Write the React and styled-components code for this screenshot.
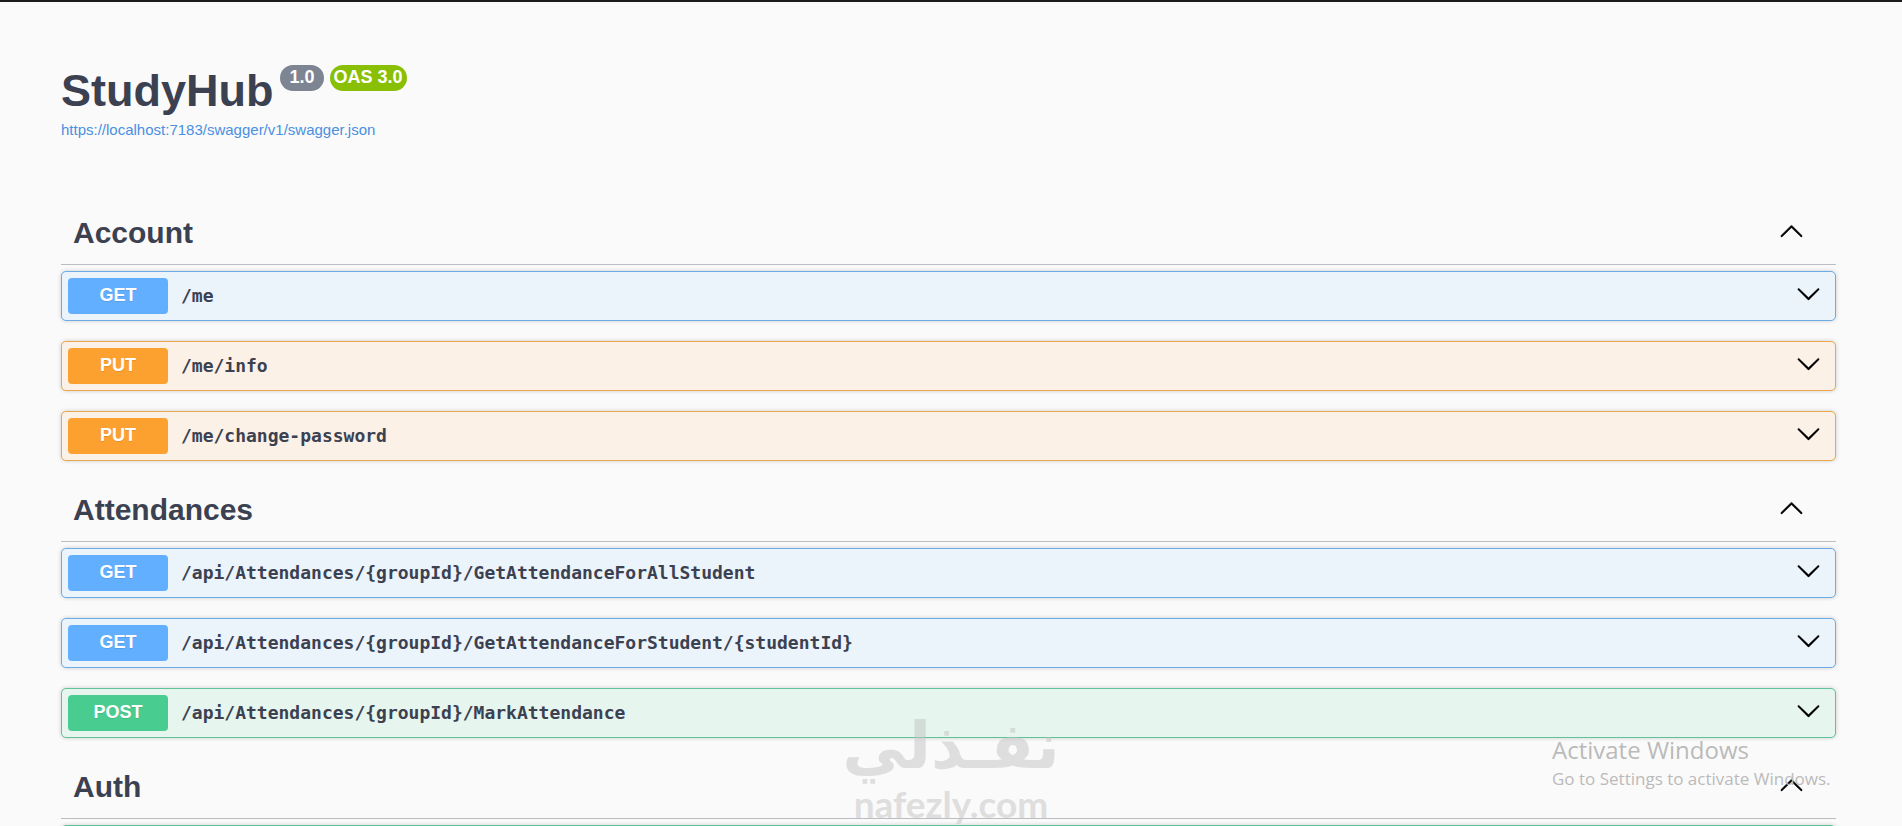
import React from "react";
import styled, { createGlobalStyle } from "styled-components";

const GlobalStyle = createGlobalStyle`
  *, *::before, *::after { box-sizing: border-box; }
  body {
    margin: 0;
    background: #fafafa;
    color: #3b4151;
    font-family: "Liberation Sans", Arial, sans-serif;
  }
`;

const tones = {
  GET: { main: "#61affe", border: "#6cabe6", fill: "#ebf3fb" },
  PUT: { main: "#fca130", border: "#eba64d", fill: "#fbf1e6" },
  POST: { main: "#49cc90", border: "#5fc29a", fill: "#e6f5ed" },
};

const Page = styled.div`
  position: relative;
  height: 100vh;
  overflow: hidden;
  border-top: 2px solid #1b1b1d;
  padding-right: 5px;
`;

const Container = styled.main`
  max-width: 1825px;
  margin: 0 auto;
  padding: 0 25px;
`;

const Info = styled.header`
  padding: 62px 0 64px;
`;

const TitleRow = styled.div`
  display: flex;
  align-items: flex-start;
`;

const Title = styled.h1`
  margin: 0 7px 0 0;
  font-size: 45px;
  line-height: 54px;
`;

const Badge = styled.span`
  height: 26px;
  margin: 1px 6px 0 0;
  padding: 0 ${(p) => (p.$wide ? 9 : 4)}px;
  border-radius: 13px;
  background: ${(p) => p.$color};
  color: #fff;
  font-size: 18px;
  font-weight: 700;
  line-height: 24px;
`;

const SpecLink = styled.a`
  display: inline-block;
  margin-top: 2px;
  color: #4990e2;
  font-size: 15px;
  line-height: 20px;
  text-decoration: none;
`;

const Section = styled.section`
  margin-bottom: 20px;
`;

const SectionHeader = styled.div`
  display: flex;
  align-items: center;
  justify-content: space-between;
  margin-bottom: 6px;
  padding: 11px 32px 13px 12px;
  border-bottom: 1px solid #bcbdc2;
`;

const SectionTitle = styled.h2`
  margin: 0;
  font-size: 30px;
  line-height: 36px;
`;

const IconButton = styled.button`
  display: flex;
  padding: 0 0 ${(p) => (p.$raised ? 6 : 5)}px;
  border: 0;
  background: none;
  color: #000;
  cursor: pointer;
`;

const OperationList = styled.div`
  display: flex;
  flex-direction: column;
  gap: 20px;
`;

const Operation = styled.div`
  display: flex;
  align-items: center;
  min-height: 50px;
  padding: 0 14px 0 6px;
  border: 1px solid ${(p) => tones[p.$method].border};
  border-radius: 5px;
  background: ${(p) => tones[p.$method].fill};
  box-shadow: 0 0 4px rgba(0, 0, 0, 0.19);
`;

const Method = styled.span`
  flex: none;
  width: 100px;
  height: 36px;
  border-radius: 4px;
  background: ${(p) => tones[p.$method].main};
  color: #fff;
  font-size: 18px;
  font-weight: 700;
  line-height: 34px;
  text-align: center;
  text-shadow: 0 1px 0 rgba(0, 0, 0, 0.1);
`;

const Path = styled.span`
  flex: 1;
  padding: 0 13px;
  font-family: "DejaVu Sans Mono", monospace;
  font-size: 18px;
  font-weight: 700;
  line-height: 24px;
`;

const Watermark = styled.div`
  position: absolute;
  right: 0;
  bottom: 4px;
  left: 0;
  color: #c4c4c4;
  opacity: 0.5;
  text-align: center;
  pointer-events: none;
`;

const WatermarkArabic = styled.div`
  font-family: "DejaVu Sans", sans-serif;
  font-size: 64px;
  font-weight: 700;
  line-height: 80px;
`;

const WatermarkLatin = styled.div`
  font-family: Lato, sans-serif;
  font-size: 37px;
  font-weight: 700;
  line-height: 36px;
`;

const Activation = styled.aside`
  position: absolute;
  right: 66px;
  bottom: 34px;
  width: 284px;
  color: #bababa;
  font-family: "Open Sans", sans-serif;
  font-size: 17px;
  line-height: 26px;
  pointer-events: none;
`;

const ActivationTitle = styled.div`
  font-size: 24px;
  line-height: 32px;
`;

const chevrons = {
  up: "M17.418 14.908c.272.268.709.268.979 0s.271-.701 0-.969l-7.908-7.83c-.27-.268-.707-.268-.979 0l-7.908 7.83c-.27.268-.27.701 0 .969.271.268.709.268.979 0L10 7.767l7.418 7.141z",
  down: "M17.418 6.109c.272-.268.709-.268.979 0s.271.701 0 .969l-7.908 7.83c-.27.268-.707.268-.979 0l-7.908-7.83c-.27-.268-.27-.701 0-.969.271-.268.709-.268.979 0L10 13.25l7.418-7.141z",
};

function Chevron({ direction }) {
  return (
    <svg
      width="25"
      height="25"
      viewBox="0 0 20 20"
      fill="currentColor"
      stroke="currentColor"
      strokeWidth="0.3"
      aria-hidden="true"
    >
      <path d={chevrons[direction]} />
    </svg>
  );
}

const sections = [
  {
    name: "Account",
    operations: [
      ["GET", "/me"],
      ["PUT", "/me/info"],
      ["PUT", "/me/change-password"],
    ],
  },
  {
    name: "Attendances",
    operations: [
      ["GET", "/api/Attendances/{groupId}/GetAttendanceForAllStudent"],
      ["GET", "/api/Attendances/{groupId}/GetAttendanceForStudent/{studentId}"],
      ["POST", "/api/Attendances/{groupId}/MarkAttendance"],
    ],
  },
  { name: "Auth", operations: [["POST", ""]] },
];

export default function App() {
  return (
    <Page>
      <GlobalStyle />
      <Container>
        <Info>
          <TitleRow>
            <Title>StudyHub</Title>
            <Badge $color="#7d8492" $wide>1.0</Badge>
            <Badge $color="#89bf04">OAS 3.0</Badge>
          </TitleRow>
          <SpecLink href="#spec">https://localhost:7183/swagger/v1/swagger.json</SpecLink>
        </Info>
        {sections.map(({ name, operations }) => (
          <Section key={name}>
            <SectionHeader>
              <SectionTitle>{name}</SectionTitle>
              <IconButton $raised aria-label={name} aria-expanded="true">
                <Chevron direction="up" />
              </IconButton>
            </SectionHeader>
            <OperationList>
              {operations.map(([method, path]) => (
                <Operation key={path} $method={method}>
                  {path && (
                    <>
                      <Method $method={method}>{method}</Method>
                      <Path>{path}</Path>
                      <IconButton aria-label={path} aria-expanded="false">
                        <Chevron direction="down" />
                      </IconButton>
                    </>
                  )}
                </Operation>
              ))}
            </OperationList>
          </Section>
        ))}
      </Container>
      <Watermark>
        <WatermarkArabic lang="ar" dir="rtl">نفـذلي</WatermarkArabic>
        <WatermarkLatin>nafezly.com</WatermarkLatin>
      </Watermark>
      <Activation>
        <ActivationTitle>Activate Windows</ActivationTitle>
        Go to Settings to activate Windows.
      </Activation>
    </Page>
  );
}
